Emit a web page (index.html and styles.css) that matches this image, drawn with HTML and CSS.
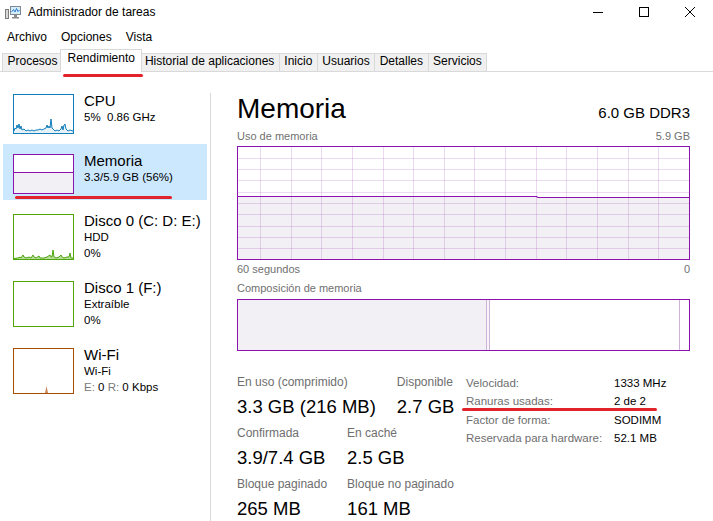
FILE: index.html
```html
<!DOCTYPE html>
<html lang="es">
<head>
<meta charset="utf-8">
<title>Administrador de tareas</title>
<link rel="stylesheet" href="styles.css">
</head>
<body>
<div class="window">
  <header class="titlebar">
    <svg class="app-icon" viewBox="0 0 16 16" width="16" height="16">
      <rect x="0.5" y="5.5" width="3" height="9" fill="#d8d8d8" stroke="#7d7d7d"/>
      <rect x="5.5" y="2.5" width="10" height="8" fill="#d7ecf9" stroke="#7d8a96"/>
      <polyline points="6.5,8 8.5,5.5 10,8 11.5,4.5 13,7.5 14.5,6" fill="none" stroke="#2b7cd3" stroke-width="1"/>
      <rect x="9" y="11" width="3" height="2" fill="#8a8a8a"/>
      <rect x="7" y="13" width="7" height="1.5" fill="#8a8a8a"/>
    </svg>
    <span class="app-title">Administrador de tareas</span>
    <div class="controls">
      <span class="ctl"><svg viewBox="0 0 10 10"><path d="M0 5.5H10" stroke="#000" stroke-width="1"/></svg></span>
      <span class="ctl"><svg viewBox="0 0 10 10"><rect x="0.5" y="0.5" width="9" height="9" fill="none" stroke="#000"/></svg></span>
      <span class="ctl"><svg viewBox="0 0 10 10"><path d="M0 0L10 10M10 0L0 10" stroke="#000" stroke-width="1"/></svg></span>
    </div>
  </header>

  <nav class="menubar">
    <span class="menu-item">Archivo</span>
    <span class="menu-item">Opciones</span>
    <span class="menu-item">Vista</span>
  </nav>

  <div class="tabs">
    <span class="tab">Procesos</span>
    <span class="tab active">Rendimiento</span>
    <span class="tab">Historial de aplicaciones</span>
    <span class="tab">Inicio</span>
    <span class="tab">Usuarios</span>
    <span class="tab">Detalles</span>
    <span class="tab">Servicios</span>
  </div>

  <div class="content">
    <aside class="sidebar">
      <div class="res">
        <div class="thumb cpu">
          <svg viewBox="0 0 59 38" width="59" height="38">
            <polygon class="fill" points="0,38 0,36 1,33 2,34 3,30 4,33 5,29 6,34 7,31 8,35 10,34 12,36 14,35 16,36 18,35 20,36 22,35 24,35 26,34 28,35 30,34 32,33 33,30 34,33 35,31 36,33 37,24 38,33 39,34 41,36 43,35 45,36 47,34 48,31 49,35 50,30 51,29 52,34 54,36 56,35 59,36 59,38"/>
            <polyline class="stroke" points="0,36 1,33 2,34 3,30 4,33 5,29 6,34 7,31 8,35 10,34 12,36 14,35 16,36 18,35 20,36 22,35 24,35 26,34 28,35 30,34 32,33 33,30 34,33 35,31 36,33 37,24 38,33 39,34 41,36 43,35 45,36 47,34 48,31 49,35 50,30 51,29 52,34 54,36 56,35 59,36"/>
          </svg>
        </div>
        <div class="res-text">
          <div class="res-name">CPU</div>
          <div class="res-sub">5%&nbsp; 0.86 GHz</div>
        </div>
      </div>

      <div class="res selected">
        <div class="thumb mem">
          <div class="mem-free"></div>
          <div class="mem-used"></div>
        </div>
        <div class="res-text">
          <div class="res-name">Memoria</div>
          <div class="res-sub">3.3/5.9 GB (56%)</div>
        </div>
      </div>

      <div class="res">
        <div class="thumb disk tall">
          <svg viewBox="0 0 59 44" width="59" height="44">
            <polygon class="fill" points="0,44 0,43.5 4,43 6,42 7,43 9,40 10,42 12,43 15,42 17,43 19,40 20,42 22,43 25,41 26,43 30,43 33,42 36,40 37,42 38,42 39,35 40,42 42,43 45,42 47,40 48,42 50,43 53,42 55,42 56,38 57,43 59,43 59,44"/>
            <polyline class="stroke" points="0,43.5 4,43 6,42 7,43 9,40 10,42 12,43 15,42 17,43 19,40 20,42 22,43 25,41 26,43 30,43 33,42 36,40 37,42 38,42 39,35 40,42 42,43 45,42 47,40 48,42 50,43 53,42 55,42 56,38 57,43 59,43"/>
          </svg>
        </div>
        <div class="res-text">
          <div class="res-name">Disco 0 (C: D: E:)</div>
          <div class="res-sub">HDD</div>
          <div class="res-sub">0%</div>
        </div>
      </div>

      <div class="res">
        <div class="thumb disk tall"></div>
        <div class="res-text">
          <div class="res-name">Disco 1 (F:)</div>
          <div class="res-sub">Extraíble</div>
          <div class="res-sub">0%</div>
        </div>
      </div>

      <div class="res">
        <div class="thumb net tall">
          <svg viewBox="0 0 59 44" width="59" height="44">
            <polygon class="fill" points="0,44 31,44 32.5,37 34,44 59,44"/>
          </svg>
        </div>
        <div class="res-text">
          <div class="res-name">Wi-Fi</div>
          <div class="res-sub">Wi-Fi</div>
          <div class="res-sub"><span class="dim">E:</span> 0 <span class="dim">R:</span> 0 Kbps</div>
        </div>
      </div>
    </aside>

    <main class="panel">
      <div class="panel-head">
        <h1 class="panel-title">Memoria</h1>
        <span class="panel-spec">6.0 GB DDR3</span>
      </div>

      <div class="caption"><span>Uso de memoria</span><span>5.9 GB</span></div>
      <div class="chart-box">
        <svg viewBox="0 0 451 112" width="451" height="112">
          <path class="area" d="M0 49.5H298.5L300 50.5H451V112H0Z"/>
          <path class="grid" d="M22.5 0V112M53.5 0V112M83.5 0V112M114.5 0V112M145.5 0V112M175.5 0V112M206.5 0V112M236.5 0V112M267.5 0V112M298.5 0V112M328.5 0V112M359.5 0V112M390.5 0V112M420.5 0V112M0 11.5H451M0 22.5H451M0 33.5H451M0 45.5H451M0 56.5H451M0 67.5H451M0 79.5H451M0 90.5H451M0 101.5H451"/>
          <path class="line" d="M0 49.5H298.5L300 50.5H451"/>
        </svg>
      </div>
      <div class="caption tight"><span>60 segundos</span><span>0</span></div>

      <div class="caption comp-label"><span>Composición de memoria</span></div>
      <div class="comp-bar">
        <div class="seg used"></div>
        <div class="seg modified"></div>
        <div class="seg standby"></div>
        <div class="seg free"></div>
      </div>

      <section class="stats">
        <div class="usage">
          <div class="stat-row wide">
            <div class="stat"><div class="stat-label">En uso (comprimido)</div><div class="stat-value">3.3 GB (216 MB)</div></div>
            <div class="stat"><div class="stat-label">Disponible</div><div class="stat-value">2.7 GB</div></div>
          </div>
          <div class="stat-row">
            <div class="stat"><div class="stat-label">Confirmada</div><div class="stat-value">3.9/7.4 GB</div></div>
            <div class="stat"><div class="stat-label">En caché</div><div class="stat-value">2.5 GB</div></div>
          </div>
          <div class="stat-row">
            <div class="stat"><div class="stat-label">Bloque paginado</div><div class="stat-value">265 MB</div></div>
            <div class="stat"><div class="stat-label">Bloque no paginado</div><div class="stat-value">161 MB</div></div>
          </div>
        </div>
        <dl class="specs">
          <dt>Velocidad:</dt><dd>1333 MHz</dd>
          <dt>Ranuras usadas:</dt><dd>2 de 2</dd>
          <dt>Factor de forma:</dt><dd>SODIMM</dd>
          <dt>Reservada para hardware:</dt><dd>52.1 MB</dd>
        </dl>
      </section>
    </main>
  </div>

  <!-- hand-drawn red underlines on top of the window -->
  <span class="mark mark-tab"></span>
  <span class="mark mark-side"></span>
  <span class="mark mark-slots"></span>
</div>
</body>
</html>
```

FILE: styles.css
```css
* { box-sizing: border-box; }

html, body {
  margin: 0;
  padding: 0;
  background: #fff;
}

body {
  font-family: "Liberation Sans", Arial, sans-serif;
  color: #000;
}

.window {
  position: relative;
  width: 713px;
  height: 521px;
  overflow: hidden;
  background: #fff;
}

/* title bar */
.titlebar {
  display: flex;
  align-items: center;
  height: 23px;
}

.app-icon {
  margin-left: 5px;
  flex: none;
}

.app-title {
  margin-left: 7px;
  font-size: 12px;
  line-height: 16px;
}

.controls {
  margin-left: auto;
  display: flex;
  align-self: stretch;
}

.ctl {
  width: 46px;
  display: flex;
  align-items: center;
  justify-content: center;
}

.ctl svg {
  width: 10px;
  height: 10px;
  display: block;
}

/* menu bar */
.menubar {
  display: flex;
  height: 25px;
  padding-top: 4px;
  font-size: 12px;
  line-height: 20px;
}

.menu-item {
  padding: 0 7px;
}

/* tab strip */
.tabs {
  display: flex;
  align-items: flex-end;
  height: 24px;
  padding-left: 2px;
  border-bottom: 1px solid #d9d9d9;
}

.tab {
  height: 18px;
  padding: 0 4.5px;
  margin-right: -1px;
  font-size: 12px;
  line-height: 15px;
  white-space: nowrap;
  background: #f0f0f0;
  border: 1px solid #d9d9d9;
  border-bottom: none;
}

.tab.active {
  position: relative;
  z-index: 1;
  height: 23px;
  margin: 0 -3px -1px -2px;
  padding: 1px 6.5px 0;
  background: #fff;
}

/* body: sidebar + detail panel */
.content {
  display: flex;
  align-items: flex-start;
}

.sidebar {
  width: 210px;
  flex: none;
  padding: 12px 3px 0;
}

.res {
  display: flex;
  gap: 10px;
  padding: 10px 0 6px 10px;
  margin-bottom: 4px;
}

.res.selected {
  background: #cce8ff;
}

.thumb {
  width: 61px;
  height: 40px;
  flex: none;
  border: 1px solid;
  background: #fff;
  display: flex;
  flex-direction: column;
  overflow: hidden;
}

.thumb.tall { height: 46px; }

.thumb svg { display: block; }

.thumb.cpu { border-color: #117dbb; }
.thumb.cpu .fill { fill: #e6f1f8; }
.thumb.cpu .stroke { fill: none; stroke: #117dbb; stroke-width: 1; }

.thumb.mem { border-color: #8b12ae; }
.mem-free { height: 17px; }
.mem-used {
  flex: 1;
  background: #f2f0f4;
  border-top: 1px solid #8b12ae;
}

.thumb.disk { border-color: #4da60c; }
.thumb.disk .fill { fill: #b9dc9f; }
.thumb.disk .stroke { fill: none; stroke: #4da60c; stroke-width: 1; }

.thumb.net { border-color: #a74f01; }
.thumb.net .fill { fill: #c9875a; }

.res-text {
  margin-top: -2px;
  white-space: nowrap;
}

.res-name {
  font-size: 15px;
  line-height: 18px;
}

.res-sub {
  font-size: 11.5px;
  line-height: 15.5px;
}

.dim { color: #7a7a7a; }

/* detail panel */
.panel {
  flex: 1;
  margin-top: 21px;
  padding: 0 23px 0 26px;
  border-left: 1px solid #d9d9d9;
  min-height: 428px;
}

.panel-head {
  display: flex;
  justify-content: space-between;
  align-items: baseline;
}

.panel-title {
  margin: 0;
  font-size: 28px;
  line-height: 32px;
  font-weight: normal;
}

.panel-spec {
  font-size: 15px;
}

.caption {
  display: flex;
  justify-content: space-between;
  margin-top: 4px;
  font-size: 11px;
  line-height: 15px;
  color: #707070;
}

.caption.tight { margin-top: 2px; }
.caption.comp-label { margin-top: 4px; }

.chart-box {
  margin-top: 2px;
  height: 114px;
  border: 1px solid #8b12ae;
}

.chart-box svg { display: block; }
.chart-box .area { fill: #f2f0f4; }
.chart-box .grid { fill: none; stroke: rgba(139, 18, 174, 0.16); stroke-width: 1; }
.chart-box .line { fill: none; stroke: #8b12ae; stroke-width: 1.2; }

.comp-bar {
  display: flex;
  margin-top: 3px;
  height: 52px;
  border: 1px solid #8b12ae;
}

.seg.used { width: 248px; background: #f2f0f4; }
.seg.modified {
  width: 4px;
  background: #f7f5f8;
  border-left: 1px solid #cfb2da;
  border-right: 1px solid #cfb2da;
}
.seg.standby { width: 190px; border-right: 1px solid #cfb2da; }
.seg.free { flex: 1; }

/* numbers under the bars */
.stats {
  display: flex;
  align-items: flex-start;
  margin-top: 24px;
}

.usage {
  width: 229px;
  flex: none;
  display: flex;
  flex-direction: column;
  gap: 2px;
}

.stat-row {
  display: flex;
  white-space: nowrap;
}

.stat {
  flex: none;
  min-width: 110px;
  padding-right: 20px;
}

.stat-row.wide .stat { padding-right: 21px; }

.stat-label {
  font-size: 12px;
  line-height: 15px;
  color: #6e6e6e;
}

.stat-value {
  font-size: 18.5px;
  line-height: 34px;
}

.specs {
  margin: -1px 0 0;
  display: grid;
  grid-template-columns: 148px auto;
  align-content: start;
  font-size: 11.5px;
  line-height: 18.3px;
  white-space: nowrap;
}

.specs dt { color: #6e6e6e; }
.specs dd { margin: 0; }

/* red pen marks */
.mark {
  position: absolute;
  height: 3px;
  border-radius: 2px;
  background: #e3232b;
}

.mark-tab { left: 63px; top: 74px; width: 80px; }
.mark-side { left: 15px; top: 196px; width: 157px; }
.mark-slots { left: 462px; top: 408px; width: 195px; }
```
